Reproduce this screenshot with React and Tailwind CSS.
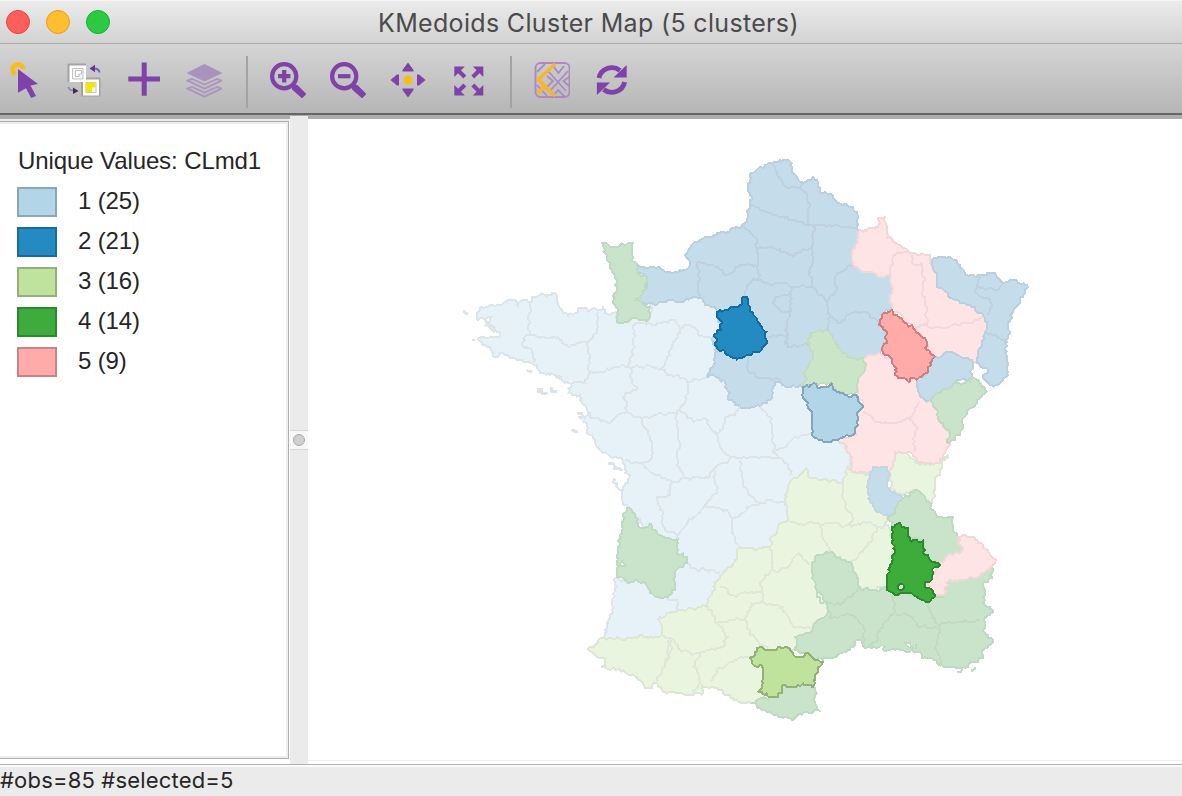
import React from "react";

const PURPLE = "#7f42a9";

/* ---------- geometry helpers ---------- */

const parse = (s) => s.trim().split(/\s+/).map((p) => p.split(",").map(Number));

const noise = (a, b, c, d) => {
  const v = Math.sin(a * 12.9898 + b * 78.233 + c * 37.719 + d * 4.581) * 43758.5453;
  return (v - Math.floor(v)) * 2 - 1;
};

// Splits an edge by midpoint displacement; the same edge gives the same result in either direction.
const split = (p, q, depth) => {
  const dx = q[0] - p[0];
  const dy = q[1] - p[1];
  const len = Math.hypot(dx, dy);
  if (depth === 0 || len < 3) return [q];
  const flip = p[0] > q[0] || (p[0] === q[0] && p[1] > q[1]);
  const [a, b] = flip ? [q, p] : [p, q];
  const n = noise(a[0], a[1], b[0], b[1]);
  const k = Math.sign(n) * (0.35 + 0.65 * Math.abs(n)) * Math.min(len * 0.24, 1.5);
  const m = [(a[0] + b[0]) / 2 - ((b[1] - a[1]) / len) * k, (a[1] + b[1]) / 2 + ((b[0] - a[0]) / len) * k];
  return [...split(p, m, depth - 1), ...split(m, q, depth - 1)];
};

const CELL = 5 / 3;
const snap = (v) => (Math.round(v / CELL) * CELL).toFixed(2);

const toPath = (s, closed) => {
  const pts = parse(s);
  const out = [pts[0]];
  for (let i = 1; i < pts.length; i++) out.push(...split(pts[i - 1], pts[i], 5));
  if (closed) out.push(...split(pts[pts.length - 1], pts[0], 5));
  return "M" + out.map((p) => `${snap(p[0])} ${snap(p[1])}`).join("L") + (closed ? "Z" : "");
};

/* ---------- map data ---------- */

const AREAS = [
  // west
  ["#e7f2f8", "#dde5eb", "616,312 607,314 604,307 598,310 593,309 589,311 585,308 579,308 575,313 568,317 563,312 558,303 557,295 552,293 546,297 542,294 532,296 531,301 525,300 518,306 513,300 505,302 497,305 482,307 478,312 478,320 492,317 485,326 498,332 500,337 490,337 478,340 490,346 493,357 503,354 515,358 530,363 543,374 557,377 565,383 572,385 569,393 582,398 583,405 589,412 584,422 593,437 600,450 613,458 623,461 625,470 629,480 622,492 622,500 628,507 640,520 642,528 650,524 658,535 678,539 677,553 687,557 687,563 678,568 675,587 670,595 658,597 643,582 627,582 616,578 612,603 607,627 603,638 660,637 660,617 677,612 708,607 715,588 720,575 737,560 740,546 757,550 772,545 770,538 783,522 788,520 785,495 792,480 807,469 810,478 843,483 847,467 852,457 838,438 831,441 817,439 812,433 812,417 808,403 804,397 803,386 790,386 778,382 773,388 772,398 760,407 740,407 728,400 725,383 715,377 706,376 715,363 716,351 713,338 722,327 716,312 713,307 703,300 693,297 680,302 667,301 650,304 650,317 647,322 630,320 621,324 616,320"],
  // north
  ["#c5dceb", "#bccfdd", "637,264 650,267 670,272 683,270 690,263 686,258 690,248 708,237 730,232 742,225 748,217 750,203 750,173 767,165 782,161 789,160 792,174 802,182 813,177 818,185 821,193 833,196 837,204 853,206 857,212 856,228 859,232 857,240 852,252 853,265 867,272 877,275 890,277 892,287 890,302 892,309 883,313 880,325 887,337 881,350 882,355 873,358 863,359 850,359 838,348 833,337 825,330 810,333 807,345 813,358 803,373 806,380 803,386 790,386 778,382 773,388 772,398 760,407 740,407 728,400 725,383 715,377 706,376 715,363 716,351 713,338 722,327 716,312 713,307 703,300 693,297 680,302 667,301 650,304 637,301 647,288 646,277 637,273"],
  // south west
  ["#eaf5e0", "#dde6d5", "603,638 660,637 660,617 677,612 708,607 715,588 720,575 737,560 740,546 757,550 772,545 770,538 783,522 788,520 785,495 792,480 807,469 810,478 843,483 847,467 855,472 872,473 869,483 873,507 887,515 889,527 892,537 892,563 886,587 875,590 860,589 853,567 850,562 840,557 830,552 817,555 811,570 817,590 828,612 813,625 812,632 795,637 795,650 780,649 762,660 768,690 752,703 737,700 717,688 702,685 702,695 687,695 667,693 657,683 647,688 635,676 613,668 602,667 605,658 595,655 589,648"],
  ["#eaf5e0", "#dde6d5", "895,452 905,452 917,463 940,463 948,455 937,477 935,497 930,505 923,495 915,490 903,495 890,488 888,472 893,458"],
  // north east
  ["#fee4e4", "#f0d7d8", "859,232 867,232 878,227 879,218 885,217 886,238 897,243 910,253 930,255 934,267 936,285 950,298 983,315 987,330 977,363 963,358 945,353 934,358 925,340 913,328 892,310 890,302 892,287 890,277 877,275 867,272 853,265 852,252 857,240"],
  ["#c5dceb", "#bccfdd", "933,258 943,256 957,260 965,275 980,275 995,274 1002,282 1017,280 1028,287 1013,310 1010,333 1006,347 1008,375 993,387 983,377 988,370 977,363 987,330 983,315 950,298 936,285 934,267"],
  ["#fee4e4", "#f0d7d8", "863,359 880,354 892,360 895,373 908,382 918,377 916,387 920,397 930,400 938,417 949,430 948,447 938,463 920,463 912,453 895,452 888,472 887,467 873,467 872,473 852,472 852,457 838,438 857,435 857,413 864,407 857,395 857,387 865,368"],
  ["#c5dceb", "#bccfdd", "936,357 945,353 963,358 973,362 973,378 953,383 930,400 920,397 916,387 918,377 927,373 934,358"],
  ["#c9e4ca", "#c0d9c2", "930,400 953,383 977,380 986,392 962,420 962,430 948,443 949,430 938,417"],
  // rhone
  ["#c5dceb", "#c3d7e3", "873,467 887,467 888,488 903,498 892,515 887,515 873,507 869,483"],
  // alps and the south coast
  ["#c9e4ca", "#c0d9c2", "903,498 915,490 923,495 932,510 942,517 953,517 953,530 958,537 962,550 948,555 938,567 925,557 924,540 911,540 908,528 900,524 892,527 889,517 892,515"],
  ["#c9e4ca", "#c0d9c2", "945,595 947,583 962,580 980,577 992,567 991,578 983,587 987,607 993,612 984,620 984,630 993,640 983,650 983,658 962,668 943,667 937,660 922,659 920,652 903,650 883,650 885,646 863,646 862,640 855,642 837,657 823,661 805,654 795,650 795,637 812,632 813,625 828,612 817,590 811,570 817,555 830,552 840,557 850,562 853,567 860,589 875,590 886,588 895,595 908,593 925,602 935,598"],
  ["#c9e4ca", "#c0d9c2", "752,703 762,699 773,697 781,693 782,686 797,687 803,683 814,686 815,704 820,711 803,713 790,719 778,716 770,712 758,709"],
  ["#fee4e4", "#f0d7d8", "958,537 973,536 982,543 996,560 992,567 980,577 962,580 947,583 945,595 935,596 927,583 938,567 948,555 962,550"],
  // manche, gironde, yonne
  ["#c9e4ca", "#c0d9c2", "602,243 608,245 615,247 622,244 633,244 631,253 636,265 637,274 647,277 647,288 635,300 649,306 650,317 647,322 630,320 621,324 616,320 618,310 614,300 616,287 614,273 607,260 604,252"],
  ["#c9e4ca", "#c0d9c2", "627,508 642,528 650,524 658,535 678,539 677,553 687,557 687,563 678,568 675,587 670,595 658,597 643,582 627,582 617,577 618,553 622,527 623,515"],
  ["#cbe5c8", "#c3dcc0", "863,359 865,368 857,387 855,395 840,392 831,384 813,385 803,386 806,380 803,373 813,358 807,345 810,333 825,330 833,337 838,348 850,359"],
];

const BORDERS = [
  ["#bfd1df", [
    "772,165 777,175 787,187 800,188 802,183", "800,188 807,198 809,210 807,225",
    "750,205 767,212 783,217 807,225 814,226 827,226 847,226 857,229", "744,224 756,238 756,248",
    "756,248 780,249 793,256 803,249 813,248", "814,226 812,237 813,260 809,275 813,287",
    "755,280 780,283 793,287 813,287", "813,287 827,301 836,290 835,277 847,267 852,266",
    "696,263 713,265 725,275 740,265 755,265", "756,248 758,265 758,278 747,288 745,296",
    "696,263 700,278 699,287 700,298", "793,287 791,303 787,333 785,345",
    "790,294 777,297 773,303 780,310 790,310", "766,337 787,337 787,347 803,345 809,345",
    "827,301 830,317 826,330", "830,318 840,323 852,313 865,311 870,318 883,319",
    "746,356 747,368 757,377 777,378 780,382", "980,275 975,292 990,300 988,315",
    "987,332 1007,343", "978,287 1000,288 1003,282",
  ]],
  ["#dce4ea", [
    "528,302 530,313 530,335 524,338 523,347 533,353 533,363", "530,335 558,337 568,347 587,342",
    "598,312 597,332 587,342 588,353 590,373", "590,373 613,368 621,365 629,367",
    "590,373 585,383 572,384", "635,323 635,347 629,367", "635,323 650,324 673,320 680,328",
    "680,328 670,350 661,368", "680,328 693,326 698,335 713,340",
    "629,367 661,369 672,375 687,382 705,378", "629,367 632,380 637,390 623,397 627,412",
    "627,412 637,417 657,415 680,411 688,382", "590,412 593,419 610,424 617,417 627,412",
    "642,418 650,437 652,458 643,463 625,461", "677,413 678,450 678,463 685,477",
    "680,412 695,422 708,420 718,437 723,427 725,420 737,412 740,407",
    "718,437 720,447 730,458", "760,407 770,417 772,433 773,453",
    "730,459 767,456 778,458 788,465 790,475", "773,453 787,447 793,438 812,433",
    "773,453 778,458", "730,459 713,470 710,477 685,478 672,482", "643,463 653,473 672,482",
    "672,482 670,495 657,497 662,510 663,527 676,535 687,523 705,505 718,488 713,470",
    "705,505 727,510 733,518 760,503 745,487 740,460", "760,503 770,500 787,503",
    "733,518 732,533 738,545", "676,535 678,539", "688,563 693,568 720,572",
    "668,598 678,603 677,612",
  ]],
  ["#dfe7d8", [
    "770,546 772,570 760,583 762,592 735,597 720,587", "772,570 787,568 798,553 810,565",
    "762,592 762,602 750,607 745,618 717,623 708,607", "762,602 783,607 793,627 812,630",
    "745,618 750,635 768,648", "717,623 728,637 720,648 700,653 680,650 670,638 660,637",
    "670,638 665,663 657,682", "668,640 671,650 667,662", "700,653 693,667 700,680 693,693",
    "710,682 718,668 735,660 752,658",
    "788,520 793,522 820,525 840,525 872,523 877,528 889,525", "842,483 843,500 853,518 848,525",
    "820,527 827,543 829,552", "877,528 873,540 852,562",
  ]],
  ["#efd9db", [
    "891,277 895,255 910,253", "912,255 912,263 922,264 925,280 927,323 915,328",
    "920,325 933,328 963,323 983,317", "863,412 883,424 908,419 920,402", "908,419 917,430 913,452",
  ]],
  ["#c2dac4", [
    "817,590 820,602 843,603 858,590", "828,612 832,618 852,615 865,630 865,645",
    "892,595 895,612 880,628 878,640 868,646", "895,613 910,617 920,626 937,627",
    "928,602 930,612 940,625 960,621 980,620", "940,625 937,640 940,660 940,667",
  ]],
];

const ISLANDS = [
  "463,312 469,313", "471,340 475,340", "527,370 532,372", "538,388 542,393 546,393 541,388",
  "550,388 556,392", "578,412 583,417 579,417", "571,431 577,433", "608,464 615,466 622,470 613,469",
  "614,478 616,484 622,490", "485,322 495,328", "555,376 562,378",
];

const SELECTED = [
  ["#238bc2", "#166d9d", "745,296 749,303 750,312 758,323 766,332 766,343 762,350 745,356 737,360 725,351 717,349 714,335 721,330 722,323 716,317 716,312 732,307 739,307 742,302"],
  ["#b2d5e8", "#84a6b8", "803,386 815,384 820,388 831,384 833,390 847,395 859,397 860,403 864,407 857,413 857,427 855,434 845,437 831,441 817,439 812,433 812,417 808,403 804,397"],
  ["#ffaba9", "#c98083", "885,313 892,310 898,317 913,327 925,339 925,348 934,358 927,373 922,377 908,382 895,373 892,360 882,350 887,343 887,335 879,325"],
  ["#3eac3a", "#2a8a2c", "892,527 900,524 908,528 911,541 924,540 925,555 940,565 932,570 932,578 925,582 927,588 933,592 934,598 925,602 910,593 895,595 886,588 890,572 892,563 895,550 892,537"],
  ["#bfe39c", "#93b077", "750,658 757,648 770,650 778,647 790,649 793,655 803,657 805,653 823,661 815,675 814,686 803,683 797,687 782,686 781,693 773,697 759,692 763,683 762,667 752,663"],
];

function ClusterMap() {
  return (
    <svg className="block h-full w-full" viewBox="308 119 874 641" fill="none" shapeRendering="crispEdges" strokeLinejoin="round">
      {AREAS.map(([fill, stroke, pts], i) => (
        <path key={i} d={toPath(pts, true)} fill={fill} stroke={stroke} strokeWidth="1.9" />
      ))}
      {BORDERS.map(([stroke, lines]) =>
        lines.map((l) => <path key={l} d={toPath(l, false)} stroke={stroke} strokeWidth="1.9" />)
      )}
      {ISLANDS.map((l) => (
        <path key={l} d={toPath(l, false)} stroke="#dce4ea" strokeWidth="2.5" />
      ))}
      <path d="M957 672h4l1-3M971 671l5-3" stroke="#c2dac4" strokeWidth="2.5" />
      <path d="M619 566l3-5 4 5z" fill="#fff" stroke="#c0d9c2" strokeWidth="1.5" />
      <path d="M905 643h5l1 4 5-2v3h-7z" fill="#fff" stroke="#c0d9c2" strokeWidth="1.5" />
      {SELECTED.map(([fill, stroke, pts], i) => (
        <path key={i} d={toPath(pts, true)} fill={fill} stroke={stroke} strokeWidth="1.9" />
      ))}
      <circle cx="901" cy="587" r="3" fill="#d8ead5" stroke="#2a8a2c" strokeWidth="2" />
    </svg>
  );
}

/* ---------- toolbar icons ---------- */

const Icon = ({ children }) => (
  <svg viewBox="0 0 36 36" className="h-9 w-9 shrink-0" fill="none">
    {children}
  </svg>
);

const SelectIcon = () => (
  <Icon>
    <path d="M9.500 12.500A5.300 5.300 0 1 1 17.200 7" stroke="#fcbc12" strokeWidth="4.600" />
    <path d="M12 7L32 22l-7.500 1.500L30 34l-4.800 2-5.200-9.800-8 4.500z" fill={PURPLE} />
  </Icon>
);

const InvertIcon = () => (
  <Icon>
    <path d="M1.500 1.500h18.500v18.500h-18.500zM15 15.500h19.500v19h-19.500z" fill="#a2a2a2" />
    <path d="M3.500 3.500h16.500v16.500h-16.500zM17 17.500h16v16h-16z" fill="#fff" />
    <path d="M6.500 6.500h10.500v10.500h-10.500zM20 20.500h10v10h-10z" fill="#f4f4f4" stroke="#c4c4c4" />
    <path d="M9.500 14.500v-6h6v3.500h-2.500v2.500z" fill="#fff" stroke="#bdbdbd" />
    <path d="M19.500 30v-9.500h10v5h-3.500v4.500z" fill="#efe900" />
    <path d="M28 6.500q5 0 5.500 4" stroke="#7b62a6" strokeWidth="2" />
    <path d="M23.500 6.500l5.500-3.800v7.600z" fill="#66358e" />
    <path d="M2.500 25q.5 3.500 5 3.500" stroke="#8785aa" strokeWidth="1.700" />
    <path d="M12.500 29l-5.500-3.500v6.500z" fill="#4c2355" />
  </Icon>
);

const AddIcon = () => (
  <Icon>
    <path d="M18.200.500v33.300M2.300 17h31.700" stroke={PURPLE} strokeWidth="5" />
  </Icon>
);

const LayersIcon = () => (
  <Icon>
    <path d="M18.500 2l18 9-18 8.500-18-8.500z" fill="#aa92bf" />
    <path d="M6 17l-4.500 1.600 17 8 17-8L31 17l-12.500 5.500zM6 25l-4.500 1.600 17 8 17-8L31 25l-12.500 5.500z" stroke="#ac94c1" strokeWidth="1.900" />
  </Icon>
);

const ZoomIcon = ({ plus }) => (
  <Icon>
    <circle cx="14.200" cy="14.200" r="12.100" stroke={PURPLE} strokeWidth="4.200" />
    <path d="M23 23l4 1 8 8-3 3-9-8z" fill={PURPLE} stroke={PURPLE} strokeWidth="2" strokeLinejoin="round" />
    <path d={plus ? "M8 14.200h12.400M14.200 8v12.400" : "M8 14.200h12.400"} stroke={PURPLE} strokeWidth="4.200" />
  </Icon>
);

const PanIcon = () => (
  <Icon>
    <path d="M18 .5l5.500 7.500v1.500h-11V8zM18 35.500l5.500-7.500v-1.500h-11V28zM.5 18L7 12.500h2v11H7zM35.500 18L29 12.500h-2v11h2z" fill={PURPLE} />
    <circle cx="18" cy="18" r="4.500" fill="#fcbc12" />
  </Icon>
);

const ExtentIcon = () => (
  <Icon>
    {[0, 90, 180, 270].map((a) => (
      <g key={a} transform={`translate(.8 1) rotate(${a} 18 18)`}>
        <path d="M3.500 3.500H14L3.500 14z" fill={PURPLE} />
        <path d="M6 6l8 8" stroke={PURPLE} strokeWidth="4" />
      </g>
    ))}
  </Icon>
);

const BasemapIcon = () => (
  <Icon>
    <rect x="1.500" y="1" width="34" height="34" rx="5" stroke="#a98bc2" strokeWidth="1.900" />
    <path d="M14 9l18 20M34 9L16 29M19 4l5.500 7L30 4M35 15l-5.500 4 5.500 5M13 14l6 5-6 6M3 10l8-8M3 23l10 11M20 33l4-5 7 7" stroke="#a98bc2" strokeWidth="1.800" />
    <path d="M21 2L4.300 17.500 21 34M11.500 23.500l-8 8" stroke="#fcb424" strokeWidth="3.400" />
  </Icon>
);

const RefreshIcon = () => (
  <Icon>
    {[0, 180].map((a) => (
      <g key={a} transform={`rotate(${a} 17.800 18)`}>
        <path d="M5 16A13 12.500 0 0 1 26 8.500" stroke={PURPLE} strokeWidth="4.800" />
        <path d="M32.700 3v12.500H19.500z" fill={PURPLE} />
      </g>
    ))}
  </Icon>
);

const Divider = () => <span className="-mr-[2px] mt-[4px] h-[52px] w-[2px] shrink-0 bg-[#a3a3a3]" />;

/* ---------- legend ---------- */

const LEGEND = [
  ["1 (25)", "bg-[#b2d5e8] border-[#8aa7b8]"],
  ["2 (21)", "bg-[#238bc2] border-[#166d9d]"],
  ["3 (16)", "bg-[#bfe39c] border-[#94b078]"],
  ["4 (14)", "bg-[#3eac3a] border-[#2a8a2c]"],
  ["5 (9)", "bg-[#ffaba9] border-[#c98386]"],
];

export default function App() {
  return (
    <div className="flex h-[796px] w-[1182px] flex-col overflow-hidden bg-white font-['Liberation_Sans',sans-serif] text-[#262626]">
      <header className="flex h-[44px] shrink-0 items-center border-b border-b-[#a8a8a8] border-t border-t-[#f6f6f6] bg-linear-to-b from-[#ebebeb] to-[#d3d3d3] pl-[6px]">
        <div className="flex gap-4">
          <span className="h-6 w-6 rounded-full border border-[#e2463f] bg-[#ff5f58]" />
          <span className="h-6 w-6 rounded-full border border-[#dfa023] bg-[#ffbe2f]" />
          <span className="h-6 w-6 rounded-full border border-[#1dad2b] bg-[#2acb42]" />
        </div>
        <h1 className="ml-[268px] mt-px whitespace-nowrap font-['Inter',sans-serif] text-[25px] leading-8 tracking-[0.33px] text-[#4b4b4b]">
          KMedoids Cluster Map (5 clusters)
        </h1>
      </header>

      <nav className="h-[75px] shrink-0 border-b-4 border-[#acacac] bg-linear-to-b from-[#d5d5d5] to-[#b5b5b5]">
        <div className="flex h-[71px] items-center gap-6 border-b-2 border-[#656765] pl-[6px] pt-[3px]">
          <SelectIcon />
          <InvertIcon />
          <AddIcon />
          <LayersIcon />
          <Divider />
          <ZoomIcon plus />
          <ZoomIcon />
          <PanIcon />
          <ExtentIcon />
          <Divider />
          <BasemapIcon />
          <RefreshIcon />
        </div>
      </nav>

      <main className="flex h-[645px] shrink-0">
        <aside className="w-[290px] shrink-0 bg-white pr-px">
          <div className="h-[2px] bg-[#ececec]" />
          <section className="h-[638px] border-b border-r border-t border-[#aeaeae]">
            <div className="h-full border-b-2 border-r-2 border-t-2 border-[#efefef] bg-white pl-[17px] pt-[22px]">
              <h2 className="h-[29px] whitespace-nowrap pl-px text-[24px] leading-[30px] tracking-[-0.1px]">
                Unique Values: CLmd1
              </h2>
              <ul className="mt-[12px] flex flex-col gap-[10px]">
                {LEGEND.map(([label, swatch]) => (
                  <li key={label} className="flex h-[30px] items-center gap-[21px]">
                    <span className={"h-[30px] w-10 border-2 " + swatch} />
                    <span className="-mt-[2px] text-[24px] leading-[30px] tracking-[-0.15px]">{label}</span>
                  </li>
                ))}
              </ul>
            </div>
          </section>
        </aside>
        <div className="-mt-[3px] flex w-[18px] shrink-0 flex-col items-center bg-[#ebebeb] pt-[314px]">
          <span className="flex h-[20px] w-full items-center justify-center border-y border-[#d8d8d8] bg-[#f7f7f7]">
            <span className="h-3 w-3 rounded-full border border-[#aaa] bg-[#d0d0d0]" />
          </span>
        </div>
        <section className="flex min-w-0 grow flex-col bg-white">
          <div className="h-[641px]">
            <ClusterMap />
          </div>
          <div className="h-px bg-[#ededed]" />
        </section>
      </main>

      <footer className="flex grow items-center border-t border-[#b0b0b0] bg-[#ebebeb] pb-[2px] font-['Inter',sans-serif] text-[22px] leading-7 shadow-[inset_0_2px_0_#fafafa]">
        <span className="whitespace-nowrap tracking-[0.18px]">#obs=85 #selected=5</span>
      </footer>
    </div>
  );
}
